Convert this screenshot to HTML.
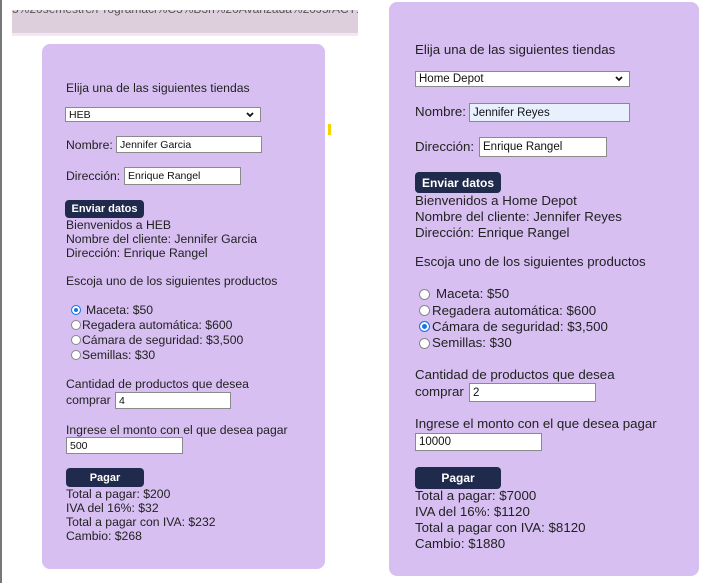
<!DOCTYPE html>
<html><head><meta charset="utf-8"><style>
*{margin:0;padding:0;box-sizing:border-box}
body{width:726px;height:583px;background:#fff;position:relative;overflow:hidden;font-family:"Liberation Sans",Arial,sans-serif;color:#222}
.a{position:absolute;white-space:nowrap}
.p{position:absolute;background:#d8bff2;border-radius:8px}
.l{font-size:12.2px;line-height:14px}
.r{font-size:13.3px;line-height:16px}
.in{position:absolute;background:#fff;border:1px solid #8a8a8a;font-size:10.5px;padding-left:3px;display:flex;align-items:center;color:#111}
.btn{position:absolute;background:#1f2a4c;color:#fff;font-weight:bold;border-radius:4px;display:flex;align-items:center;justify-content:center}
.rad{position:absolute;width:10px;height:10px;border-radius:50%;background:#fff;border:1px solid #888}
.rad.on{border:1px solid #1a73e8;box-shadow:inset 0 0 0 2px #fff;background:#1a73e8}
.chev{position:absolute;right:6px;top:50%;margin-top:-3px}
</style></head><body>
<div class="a" style="left:0;top:0;width:2px;height:583px;background:#777"></div>
<div class="a" style="left:12px;top:10px;width:346px;height:23px;background:#ddd0dc;overflow:hidden;font-size:12px;color:#555"><span style="position:absolute;top:-8px;left:0">5%20semestre/Programaci%C3%B3n%20Avanzada%20J5/ACT10-101064</span></div>
<div class="a" style="left:12px;top:33px;width:346px;height:3px;background:#f4e6f2"></div>
<div class="a" style="left:328px;top:124px;width:3px;height:11px;background:#f5d400"></div>

<div class="p" style="left:42px;top:44px;width:283px;height:525px"></div>
<div class="a l" style="left:66px;top:81px">Elija una de las siguientes tiendas</div>
<div class="in" style="left:65px;top:107px;width:196px;height:15px">HEB<svg class="chev" width="8" height="6" viewBox="0 0 8 6"><path d="M1 1L4 4L7 1" stroke="#111" stroke-width="1.8" fill="none"/></svg></div>
<div class="a l" style="left:66px;top:138px">Nombre:</div>
<div class="in" style="left:116px;top:136px;width:146px;height:17px">Jennifer Garcia</div>
<div class="a l" style="left:66px;top:169px">Dirección:</div>
<div class="in" style="left:124px;top:167px;width:117px;height:18px">Enrique Rangel</div>
<div class="btn" style="left:65px;top:200px;width:79px;height:18px;font-size:11px">Enviar datos</div>
<div class="a l" style="left:66px;top:218px">Bienvenidos a HEB<br>Nombre del cliente: Jennifer Garcia<br>Dirección: Enrique Rangel</div>
<div class="a l" style="left:66px;top:274px">Escoja uno de los siguientes productos</div>
<div class="rad on" style="left:71px;top:305px"></div>
<div class="a l" style="left:86px;top:303px">Maceta: $50</div>
<div class="rad" style="left:71px;top:320px"></div>
<div class="a l" style="left:82px;top:318px">Regadera automática: $600</div>
<div class="rad" style="left:71px;top:335px"></div>
<div class="a l" style="left:82px;top:333px">Cámara de seguridad: $3,500</div>
<div class="rad" style="left:71px;top:350px"></div>
<div class="a l" style="left:82px;top:348px">Semillas: $30</div>
<div class="a l" style="left:66px;top:377px">Cantidad de productos que desea</div>
<div class="a l" style="left:66px;top:393px">comprar</div>
<div class="in" style="left:115px;top:392px;width:116px;height:17px">4</div>
<div class="a l" style="left:66px;top:423px">Ingrese el monto con el que desea pagar</div>
<div class="in" style="left:66px;top:437px;width:117px;height:17px">500</div>
<div class="btn" style="left:66px;top:468px;width:78px;height:19px;font-size:11px">Pagar</div>
<div class="a l" style="left:66px;top:487px">Total a pagar: $200<br>IVA del 16%: $32<br>Total a pagar con IVA: $232<br>Cambio: $268</div>

<div class="p" style="left:389px;top:2px;width:310px;height:574px"></div>
<div class="a r" style="left:415px;top:42px">Elija una de las siguientes tiendas</div>
<div class="in" style="left:415px;top:71px;width:215px;height:16px;font-size:11.5px">Home Depot<svg class="chev" width="8" height="6" viewBox="0 0 8 6"><path d="M1 1L4 4L7 1" stroke="#111" stroke-width="1.8" fill="none"/></svg></div>
<div class="a r" style="left:415px;top:104px">Nombre:</div>
<div class="in" style="left:469px;top:103px;width:161px;height:19px;background:#e8f0fe;font-size:11.5px">Jennifer Reyes</div>
<div class="a r" style="left:415px;top:139px">Dirección:</div>
<div class="in" style="left:479px;top:137px;width:128px;height:20px;font-size:11.5px">Enrique Rangel</div>
<div class="btn" style="left:415px;top:172px;width:86px;height:21px;font-size:12px">Enviar datos</div>
<div class="a r" style="left:415px;top:193px">Bienvenidos a Home Depot<br>Nombre del cliente: Jennifer Reyes<br>Dirección: Enrique Rangel</div>
<div class="a r" style="left:415px;top:254px">Escoja uno de los siguientes productos</div>
<div class="rad" style="left:419px;top:289px;width:11px;height:11px"></div>
<div class="a r" style="left:436px;top:286px">Maceta: $50</div>
<div class="rad" style="left:419px;top:305px;width:11px;height:11px"></div>
<div class="a r" style="left:432px;top:303px">Regadera automática: $600</div>
<div class="rad on" style="left:419px;top:321px;width:11px;height:11px"></div>
<div class="a r" style="left:432px;top:319px">Cámara de seguridad: $3,500</div>
<div class="rad" style="left:419px;top:338px;width:11px;height:11px"></div>
<div class="a r" style="left:432px;top:335px">Semillas: $30</div>
<div class="a r" style="left:415px;top:367px">Cantidad de productos que desea</div>
<div class="a r" style="left:415px;top:384px">comprar</div>
<div class="in" style="left:469px;top:383px;width:127px;height:19px;font-size:11.5px">2</div>
<div class="a r" style="left:415px;top:416px">Ingrese el monto con el que desea pagar</div>
<div class="in" style="left:415px;top:433px;width:127px;height:18px;font-size:11.5px">10000</div>
<div class="btn" style="left:415px;top:467px;width:86px;height:22px;font-size:12px">Pagar</div>
<div class="a r" style="left:415px;top:488px">Total a pagar: $7000<br>IVA del 16%: $1120<br>Total a pagar con IVA: $8120<br>Cambio: $1880</div>
</body></html>
